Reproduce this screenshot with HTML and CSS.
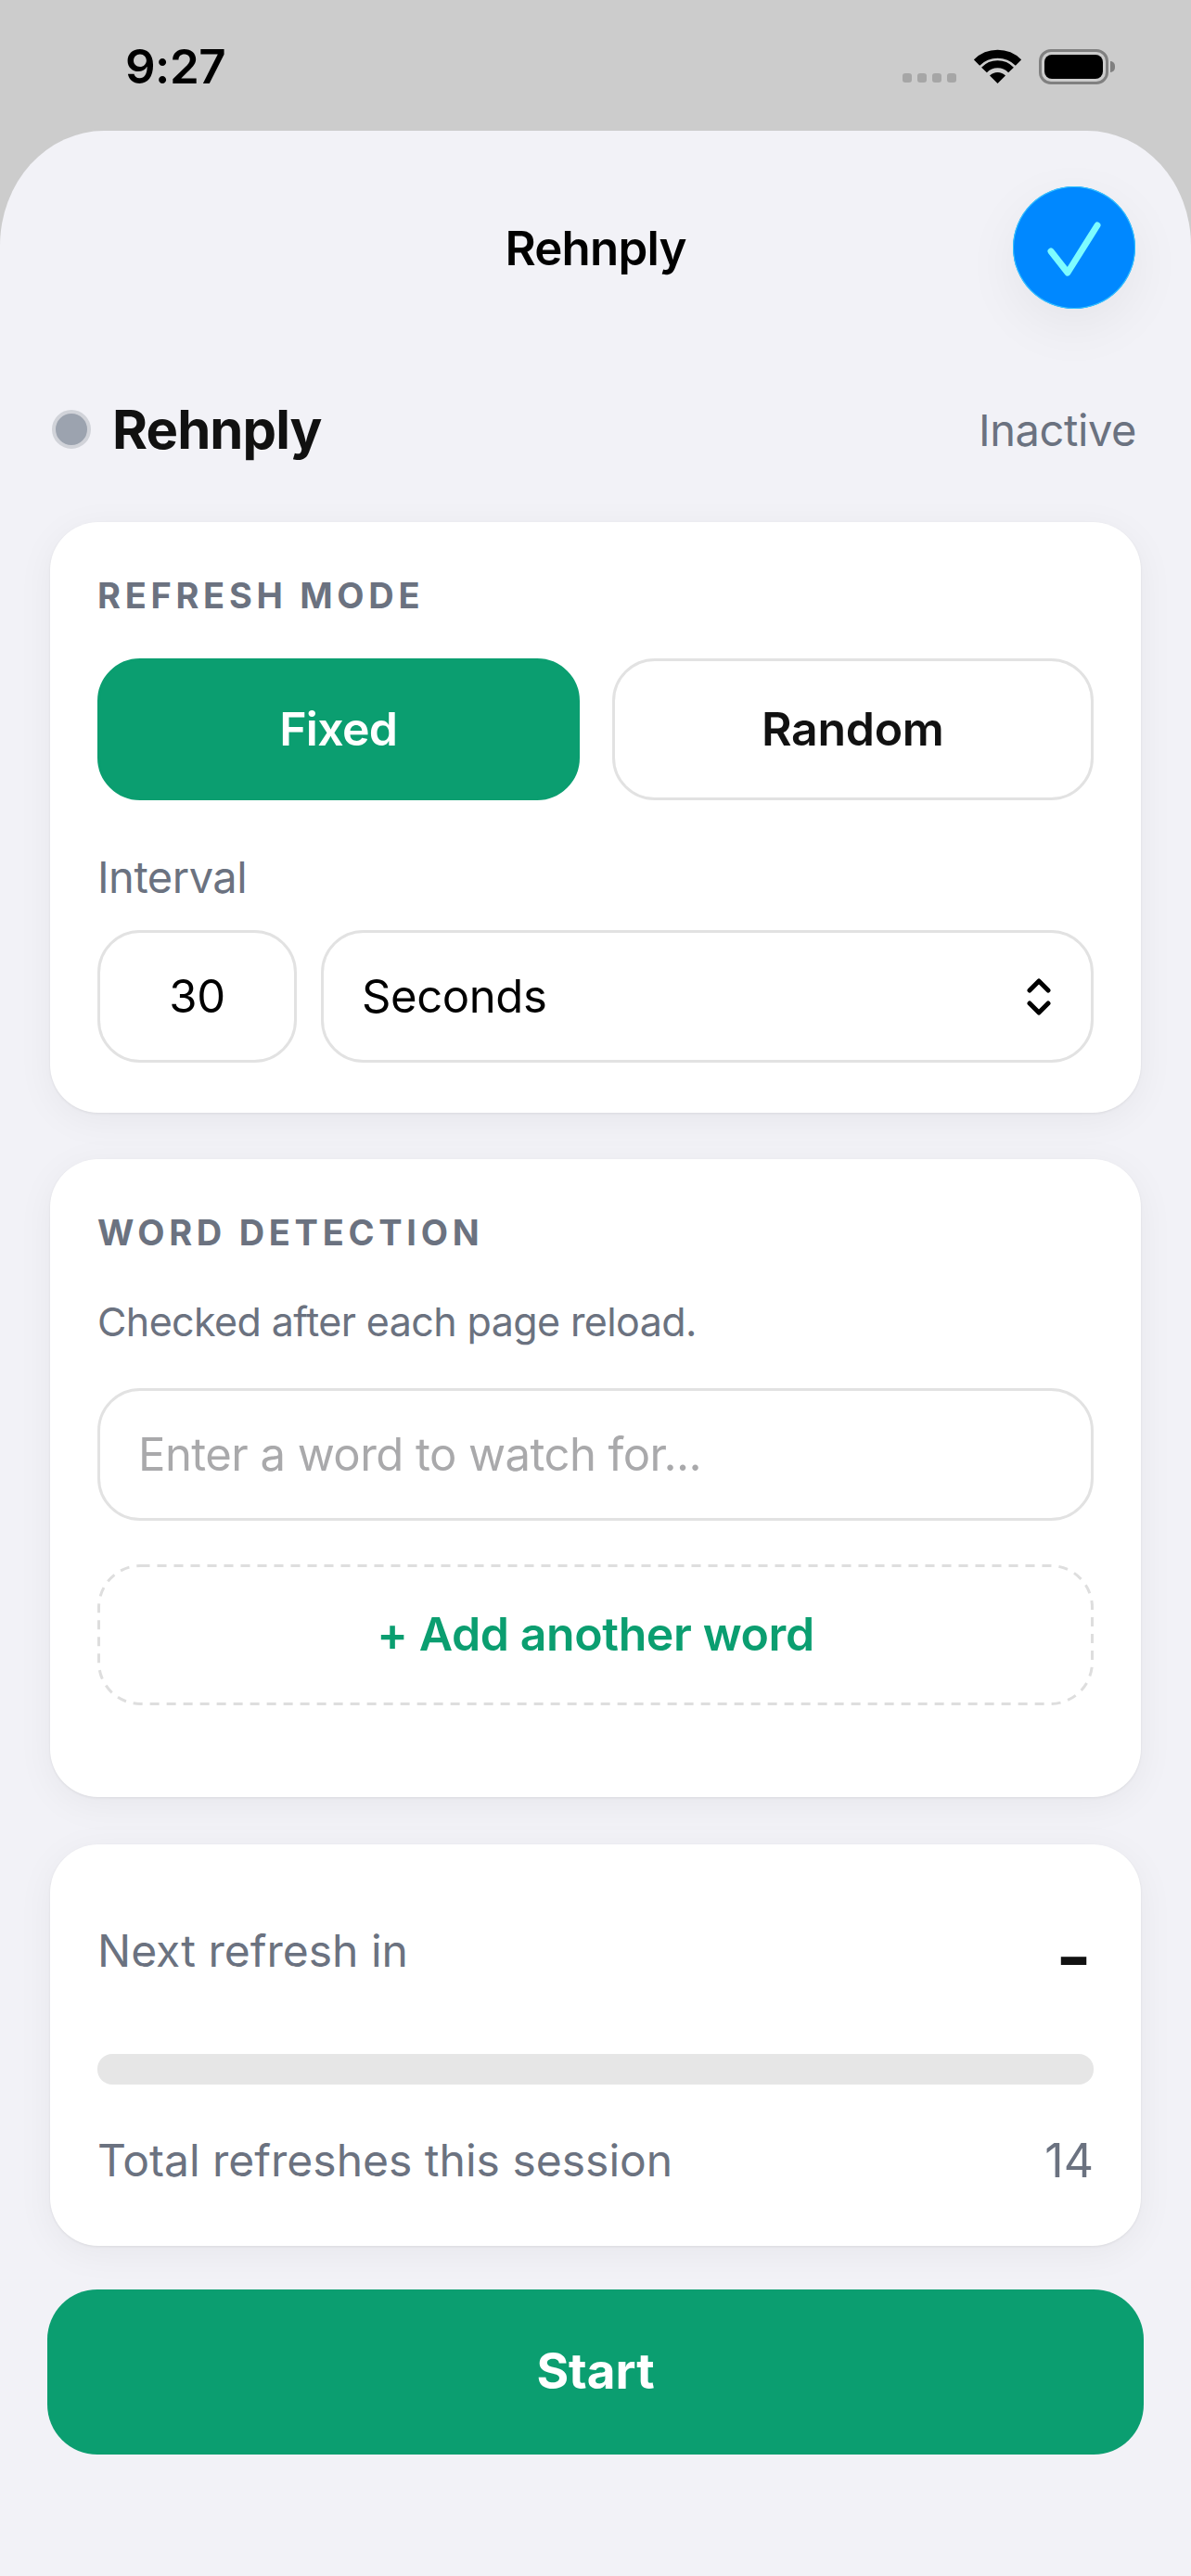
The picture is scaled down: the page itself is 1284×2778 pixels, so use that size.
FILE: index.html
```html
<!DOCTYPE html>
<html lang="en">
<head>
    <meta charset="UTF-8">
    <meta name="viewport" content="width=device-width, initial-scale=1.0">
    <title>Rehnply</title>

    <link rel="stylesheet" href="styles.css">
</head>
<body>

    <div class="status-bar">
        <span class="clock">9:27</span>
        <div class="status-icons">
            <div class="signal"><i></i><i></i><i></i><i></i></div>
            <svg class="wifi" width="51" height="37" viewBox="0 0 51 37">
                <path d="M3 14.5A32 32 0 0 1 48 14.5" fill="none" stroke="#000" stroke-width="9"/>
                <path d="M11 22.5A20 20 0 0 1 40 22.5" fill="none" stroke="#000" stroke-width="8"/>
                <path d="M25.5 37L17 28.5A12 12 0 0 1 34 28.5Z" fill="#000"/>
            </svg>
            <div class="battery"><div class="battery-fill"></div></div>
            <div class="battery-nub"></div>
        </div>
    </div>

    <main class="sheet">
        <header class="sheet-header">
            <h1 class="sheet-title">Rehnply</h1>
            <button type="button" class="done-btn" aria-label="Done">
                <svg width="132" height="132" viewBox="0 0 132 132">
                    <path d="M41 70L59 93L91 42" fill="none" stroke="#7dfcff" stroke-width="7" stroke-linecap="round" stroke-linejoin="round"/>
                </svg>
            </button>
        </header>

        <div class="app-row">
            <span class="app-dot"></span>
            <span class="app-name">Rehnply</span>
            <span class="app-state">Inactive</span>
        </div>

        <section class="card card-mode">
            <h2 class="card-label">REFRESH MODE</h2>
            <div class="mode-row">
                <button type="button" class="mode-btn active">Fixed</button>
                <button type="button" class="mode-btn">Random</button>
            </div>
            <div class="muted interval-label">Interval</div>
            <div class="interval-row">
                <input type="text" class="field interval-num" value="30">
                <div class="field interval-unit">
                    <span>Seconds</span>
                    <svg width="26" height="40" viewBox="0 0 26 40">
                        <path d="M3 13L13 3L23 13M3 27L13 37L23 27" fill="none" stroke="#000" stroke-width="5" stroke-linecap="round" stroke-linejoin="round"/>
                    </svg>
                </div>
            </div>
        </section>

        <section class="card card-words">
            <h2 class="card-label">WORD DETECTION</h2>
            <p class="muted hint">Checked after each page reload.</p>
            <input type="text" class="field word-input" placeholder="Enter a word to watch for...">
            <button type="button" class="add-btn">
                <svg class="add-outline" width="1074" height="152" viewBox="0 0 1074 152">
                    <rect x="1.5" y="1.5" width="1071" height="149" rx="45" fill="none" stroke="#dedede" stroke-width="3" stroke-dasharray="10 8"/>
                </svg>
                + Add another word
            </button>
        </section>

        <section class="card card-stats">
            <div class="stat-row">
                <span class="muted stat-text">Next refresh in</span>
                <span class="countdown">-</span>
            </div>
            <div class="progress"></div>
            <div class="stat-row total-row">
                <span class="muted stat-text">Total refreshes this session</span>
                <span class="muted stat-text stat-count">14</span>
            </div>
        </section>

        <button type="button" class="start-btn">Start</button>
    </main>

</body>
</html>
```

FILE: styles.css
```css
* {
    box-sizing: border-box;
}

body {
    font-family: Inter, "Noto Sans", sans-serif;
    background-color: #cccccc;
    margin: 0;
    padding: 0;
    height: 2778px;
    overflow: hidden;
    color: #000;
}

button,
input {
    font-family: inherit;
    outline: none;
}

/* status bar */
.status-bar {
    height: 141px;
    padding: 46px 82px 0 135px;
    display: flex;
    justify-content: space-between;
    align-items: flex-start;
}

.clock {
    font-size: 51px;
    line-height: 52px;
    font-weight: 600;
    letter-spacing: -0.5px;
}

.status-icons {
    display: flex;
    align-items: flex-start;
    margin-top: 7px;
}

.signal {
    display: flex;
    gap: 6px;
    margin-top: 26px;
    margin-right: 19px;
}

.signal i {
    display: block;
    width: 10px;
    height: 10px;
    border-radius: 3px;
    background-color: #a6a6a6;
}

.wifi {
    margin-right: 19px;
}

.battery {
    width: 75px;
    height: 38px;
    border: 3px solid #808080;
    border-radius: 13px;
    padding: 3px;
}

.battery-fill {
    height: 100%;
    background-color: #000;
    border-radius: 8px;
}

.battery-nub {
    width: 5px;
    height: 12px;
    margin-top: 13px;
    margin-left: 2px;
    background-color: #808080;
    border-radius: 0 6px 6px 0;
}

/* sheet */
.sheet {
    height: 2637px;
    background-color: #f2f2f7;
    border-radius: 112px 112px 0 0 / 124px 124px 0 0;
    padding: 60px 51px 0;
}

.sheet-header {
    display: flex;
    align-items: center;
    justify-content: flex-end;
    position: relative;
    height: 132px;
    padding-right: 9px;
}

.sheet-title {
    position: absolute;
    left: 0;
    right: 0;
    margin: 0;
    text-align: center;
    font-size: 51px;
    font-weight: 600;
    letter-spacing: -0.8px;
}

.done-btn {
    width: 132px;
    height: 132px;
    padding: 0;
    border: none;
    border-radius: 50%;
    background-color: #0088ff;
    box-shadow: 0 0 0 1px #35c5ff inset, 0 18px 60px rgba(0, 0, 0, 0.06);
    position: relative;
}

.done-btn svg {
    display: block;
}

.app-row {
    display: flex;
    align-items: center;
    height: 72px;
    margin-top: 94px;
    padding: 0 8px 0 5px;
}

.app-dot {
    width: 42px;
    height: 42px;
    border-radius: 50%;
    background-color: #9ca3af;
    border: 4px solid #d1d3d9;
    margin-right: 23px;
}

.app-name {
    font-size: 58px;
    font-weight: 700;
    letter-spacing: -0.9px;
    color: #111;
    flex: 1;
}

.app-state {
    font-size: 47px;
    letter-spacing: -0.4px;
    color: #6b7280;
}

/* cards */
.card {
    background-color: #fff;
    margin: 0 3px;
    border-radius: 52px;
    padding: 55px 51px 54px;
    box-shadow: 0 1px 3px rgba(0, 0, 0, 0.07), 0 8px 40px rgba(0, 0, 0, 0.05);
}

.card-mode {
    margin-top: 64px;
}

.card-words {
    margin-top: 50px;
    padding-bottom: 99px;
}

.card-stats {
    margin-top: 51px;
    padding-top: 85px;
    padding-bottom: 62px;
}

.card-label {
    margin: 0;
    font-size: 38px;
    line-height: 48px;
    font-weight: 700;
    letter-spacing: 4.7px;
    color: #6b7280;
}

.muted {
    color: #6b7280;
    font-size: 47px;
    line-height: 60px;
    letter-spacing: -0.5px;
}

.mode-row {
    display: flex;
    gap: 35px;
    margin-top: 44px;
}

.mode-btn {
    flex: 1;
    height: 153px;
    background-color: #fff;
    border: 3px solid #e2e2e2;
    border-radius: 46px;
    color: #111;
    font-size: 50px;
    font-weight: 600;
    letter-spacing: -0.3px;
    padding: 0 0 2px;
}

.mode-btn.active {
    background-color: #0b9e70;
    border-color: #0b9e70;
    color: #fff;
    letter-spacing: -0.7px;
}

.interval-label {
    margin-top: 53px;
}

.interval-row {
    display: flex;
    gap: 26px;
    margin-top: 27px;
}

.field {
    height: 143px;
    background-color: #fff;
    border: 3px solid #e2e2e2;
    border-radius: 46px;
    font-size: 49px;
    letter-spacing: -0.4px;
    color: #000;
}

.interval-num {
    width: 215px;
    padding: 0;
    text-align: center;
}

.interval-unit {
    flex: 1;
    display: flex;
    align-items: center;
    justify-content: space-between;
    padding: 0 43px 0 41px;
}

.hint {
    margin: 42px 0 0;
    font-size: 43px;
    letter-spacing: -0.6px;
}

.word-input {
    display: block;
    width: 100%;
    margin-top: 42px;
    padding: 0 41px;
    letter-spacing: -0.55px;
}

.word-input::placeholder {
    color: #a9a9ab;
    opacity: 1;
}

.add-btn {
    display: block;
    position: relative;
    width: 100%;
    height: 152px;
    margin-top: 47px;
    background-color: #fff;
    border: none;
    color: #0b9e70;
    font-size: 50px;
    font-weight: 600;
    letter-spacing: -0.4px;
    padding: 0 0 3px;
}

.add-outline {
    position: absolute;
    left: 0;
    top: 0;
}

.stat-row {
    display: flex;
    justify-content: space-between;
    align-items: flex-start;
}

.stat-text {
    font-size: 48px;
    letter-spacing: 0;
}

.stat-count {
    font-size: 50px;
}

.countdown {
    font-size: 84px;
    line-height: 60px;
    font-weight: 600;
    color: #111;
    padding-right: 2px;
    margin-top: 6px;
    margin-bottom: -6px;
}

.progress {
    height: 33px;
    margin-top: 81px;
    background-color: #e6e6e6;
    border-radius: 16px;
}

.total-row {
    margin-top: 52px;
}

.start-btn {
    display: block;
    width: 100%;
    height: 178px;
    margin-top: 47px;
    background-color: #0b9e70;
    border: none;
    border-radius: 54px;
    color: #fff;
    font-size: 53px;
    font-weight: 700;
    padding: 0 0 2px;
}
```
